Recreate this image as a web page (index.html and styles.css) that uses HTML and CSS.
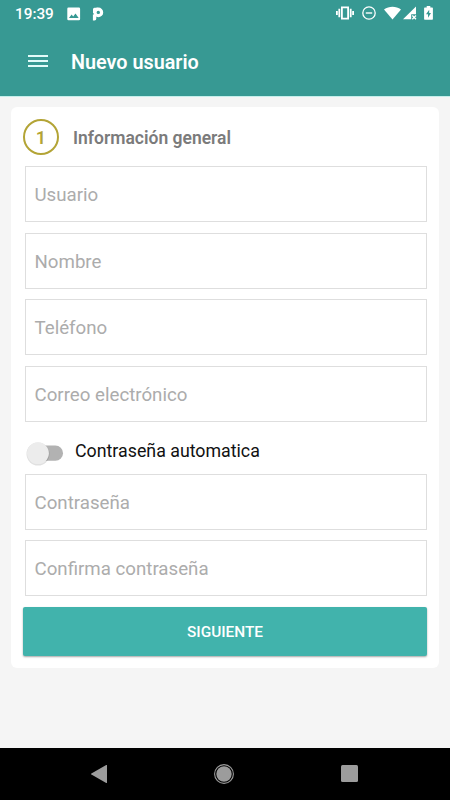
FILE: index.html
```
<!DOCTYPE html>
<html lang="es">
<head>
    <meta charset="UTF-8">
    <meta name="viewport" content="width=device-width, initial-scale=1.0">
    <title>Nuevo usuario</title>
    <link rel="stylesheet" href="styles.css">
</head>
<body>

    <header class="header">
        <div class="status-bar">
            <span class="clock">19:39</span>
            <svg class="icon-image" width="14" height="14" viewBox="0 0 14 14">
                <path fill="#fff" fill-rule="evenodd" d="M1.500 .5h10.400a1.200 1.200 0 0 1 1.200 1.200v10.400a1.200 1.200 0 0 1-1.200 1.200H1.500a1.200 1.200 0 0 1-1.200-1.200V1.700A1.200 1.200 0 0 1 1.500 .5zM2 11h9.700L8.500 6.500 6.200 9.600 4.600 7.600z"/>
            </svg>
            <svg class="icon-app" width="12" height="14" viewBox="0 0 12 14">
                <circle cx="6.300" cy="5.400" r="3.300" fill="none" stroke="#fff" stroke-width="3.200"/>
                <path fill="#fff" d="M.9 7.600h3.400v4.200a1.700 1.700 0 0 1-1.700 1.700H.9zM2.500 .8h3.500v3.100H3.500v2.200H1V2.300A1.500 1.500 0 0 1 2.500.8z"/>
            </svg>
            <div class="status-right">
                <svg width="18" height="14" viewBox="0 0 18 14">
                    <path fill="none" stroke="#fff" stroke-width="1.800" d="M5.900 1.400h6.200v11.200H5.900zM3.300 2.800v8.400M14.700 2.800v8.400M.9 5v4M17.100 5v4"/>
                </svg>
                <svg class="icon-dnd" width="14" height="14" viewBox="0 0 14 14">
                    <circle cx="7" cy="7" r="6.200" fill="none" stroke="#fff" stroke-width="1.300"/>
                    <path stroke="#fff" stroke-width="1.400" d="M3.800 7h6.400"/>
                </svg>
                <svg class="icon-wifi" width="17" height="14" viewBox="0 0 17 14">
                    <path fill="#fff" d="M0 3.400C5 0 12 0 17 3.400L8.500 13.500z"/>
                </svg>
                <svg class="icon-signal" width="14" height="14" viewBox="0 0 14 14">
                    <path fill="#fff" d="M13 .5v7.800H8.200v5H0z"/>
                    <path stroke="#fff" stroke-width="1.300" d="M9.300 9.500l3.700 3.700M13 9.500l-3.700 3.700"/>
                </svg>
                <svg class="icon-battery" width="9" height="14" viewBox="0 0 9 14">
                    <path fill="#fff" d="M2.700 0h3.600v1.500h1.900a.7.700 0 0 1 .7.700v10.900a.7.700 0 0 1-.7.700H.8a.7.700 0 0 1-.7-.7V2.200a.7.700 0 0 1 .7-.7h1.900z"/>
                    <path fill="#379993" d="M5.200 3.800L2 8.300h2v3.400l3-4.700H5.200z"/>
                </svg>
            </div>
        </div>
        <div class="toolbar">
            <div class="menu">
                <span class="menu-line"></span>
                <span class="menu-line"></span>
                <span class="menu-line"></span>
            </div>
            <h1 class="title">Nuevo usuario</h1>
        </div>
    </header>

    <main class="content">
        <div class="card">
            <div class="step">
                <span class="step-number">1</span>
                <h2 class="step-title">Información general</h2>
            </div>
            <div class="fields">
                <div class="field">Usuario</div>
                <div class="field">Nombre</div>
                <div class="field">Teléfono</div>
                <div class="field">Correo electrónico</div>
            </div>
            <div class="switch-row">
                <svg class="switch" width="40" height="26" viewBox="0 0 40 26">
                    <rect x="5" y="5.600" width="33" height="15.200" rx="7.600" fill="#b2b2b2"/>
                    <circle cx="13" cy="14" r="11.500" fill="#000" fill-opacity=".12"/>
                    <circle cx="13" cy="13.200" r="10.900" fill="#ececec"/>
                </svg>
                <span class="switch-label">Contraseña automatica</span>
            </div>
            <div class="fields">
                <div class="field">Contraseña</div>
                <div class="field">Confirma contraseña</div>
            </div>
            <button class="next">SIGUIENTE</button>
        </div>
    </main>

    <nav class="nav-bar">
        <svg width="16" height="18" viewBox="0 0 16 18">
            <path fill="#9c9c9c" d="M15.200 0a.6.600 0 0 1 .8.600v16.800a.6.600 0 0 1-.8.600L.4 9.600a.7.700 0 0 1 0-1.200z"/>
        </svg>
        <svg width="20" height="20" viewBox="0 0 20 20">
            <circle cx="10" cy="10" r="9.400" fill="none" stroke="#9c9c9c" stroke-width="1.100"/>
            <circle cx="10" cy="10" r="7.700" fill="#9c9c9c"/>
        </svg>
        <svg width="17" height="17" viewBox="0 0 17 17">
            <rect width="17" height="17" rx="1.500" fill="#9c9c9c"/>
        </svg>
    </nav>

</body>
</html>
```
FILE: styles.css
```
html, body {
    margin: 0;
    padding: 0;
    height: 100%;
    overflow: hidden;
}

body {
    display: flex;
    flex-direction: column;
    background-color: #f5f5f5;
    font-family: Roboto, "Liberation Sans", sans-serif;
}

svg {
    display: block;
    flex: none;
}

.header {
    height: 97px;
    flex: none;
    background-color: #379993;
    border-bottom: 1px solid #c5efeb;
    box-sizing: border-box;
    color: white;
}

.status-bar {
    height: 27px;
    display: flex;
    align-items: center;
    padding: 0 16px 0 15px;
}

.clock {
    width: 52px;
    font-size: 15.3px;
    font-weight: 500;
    line-height: 27px;
    margin-top: 1px;
}

.icon-app {
    margin-left: 11px;
}

.status-right {
    margin-left: auto;
    display: flex;
    align-items: center;
    margin-top: -1px;
    padding-right: 1px;
}

.icon-dnd {
    margin-left: 8px;
}

.icon-wifi {
    margin-left: 8px;
}

.icon-signal {
    margin-left: 2px;
}

.icon-battery {
    margin-left: 7px;
}

.toolbar {
    height: 68px;
    display: flex;
    align-items: center;
    padding-left: 28px;
}

.menu {
    width: 20px;
    display: flex;
    flex-direction: column;
    gap: 3px;
}

.menu-line {
    height: 2px;
    background-color: #e2fbf9;
}

.title {
    margin: 2px 0 0 23px;
    font-size: 19.8px;
    font-weight: 600;
}

.content {
    flex: 1;
    padding: 10px 11px 0;
}

.card {
    height: 561px;
    box-sizing: border-box;
    padding: 12px;
    background-color: white;
    border-radius: 6px;
}

.step {
    height: 36px;
    display: flex;
    align-items: center;
    margin-bottom: 11px;
}

.step-number {
    width: 36px;
    height: 36px;
    box-sizing: border-box;
    border: 2px solid #b3a436;
    border-radius: 50%;
    color: #b3a436;
    font-size: 18px;
    font-weight: 600;
    line-height: 34px;
    text-align: center;
}

.step-title {
    margin: 2px 0 0 14px;
    color: #7b7b7b;
    font-size: 17.5px;
    font-weight: 600;
}

.fields {
    display: flex;
    flex-direction: column;
    gap: 10.7px;
    padding: 0 0 0 2px;
}

.field {
    height: 56px;
    box-sizing: border-box;
    border: 1px solid #dedede;
    padding-left: 8.5px;
    color: #acacac;
    font-size: 18.7px;
    line-height: 57px;
}

.switch-row {
    height: 51.5px;
    box-sizing: border-box;
    display: flex;
    align-items: center;
    padding: 10px 0 0 2px;
}

.switch-label {
    margin: -4px 0 0 10px;
    font-size: 17.8px;
    color: #111;
}

.next {
    display: block;
    width: 100%;
    height: 49px;
    margin-top: 11px;
    padding-top: 2px;
    border: none;
    border-radius: 2px;
    background-color: #41b3ac;
    box-shadow: 0 1px 2px rgba(0, 0, 0, 0.35);
    color: white;
    font-family: inherit;
    font-size: 15.4px;
    font-weight: 500;
}

.nav-bar {
    height: 52px;
    flex: none;
    box-sizing: border-box;
    display: flex;
    align-items: center;
    justify-content: space-between;
    padding: 0 92px 1px 91px;
    background-color: black;
}
```
